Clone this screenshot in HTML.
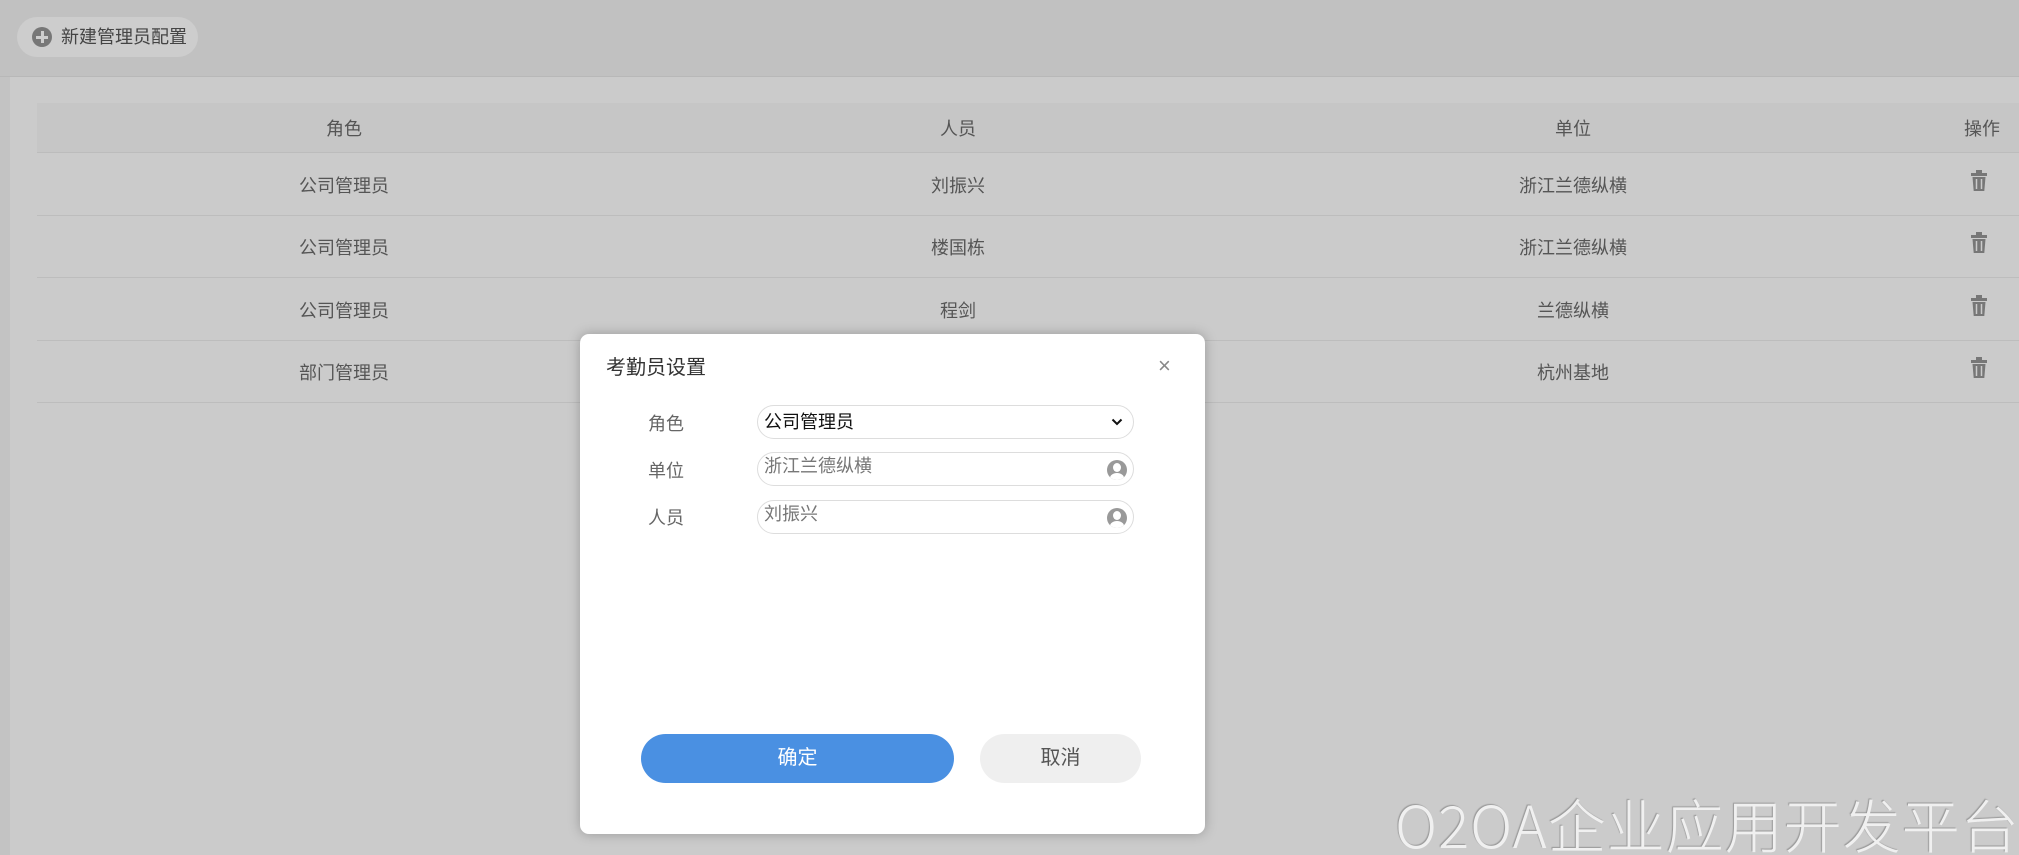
<!DOCTYPE html>
<html><head><meta charset="utf-8"><style>
*{margin:0;padding:0;box-sizing:border-box}
html,body{width:2019px;height:855px;overflow:hidden;background:#cbcbcb}
body{font-family:"Liberation Sans","Noto Sans CJK SC",sans-serif;position:relative;color:#555}
.top{position:absolute;left:0;top:0;width:2019px;height:77px;background:#c1c1c1;border-bottom:1px solid #b8b8b8}
.lstrip{position:absolute;left:0;top:77px;width:10px;height:778px;background:#c3c3c3}
.btn{position:absolute;left:17px;top:17px;width:181px;height:40px;border-radius:20px;background:#cdcdcd;font-size:18px;line-height:40px;padding-left:44px;color:#444}
.btn .ic{position:absolute;left:15px;top:10px;width:20px;height:20px;border-radius:50%;background:#777}
.btn .ic:before,.btn .ic:after{content:"";position:absolute;background:#cdcdcd}
.btn .ic:before{left:4px;top:8.5px;width:12px;height:3px}
.btn .ic:after{left:8.5px;top:4px;width:3px;height:12px}
.hdr{position:absolute;left:37px;top:103px;width:1982px;height:50px;background:#c6c6c6;border-bottom:1px solid #bcbcbc}
.row{position:absolute;left:37px;width:1982px;height:62px;border-bottom:1px solid #bdbdbd}
.c{position:absolute;transform:translateX(-50%);font-size:18px;white-space:nowrap}
.hdr .c{top:12px}
.row .c{top:18px}
.trash{position:absolute;left:1934px;top:16px}
.dlg{position:absolute;left:580px;top:334px;width:625px;height:500px;background:#fff;border-radius:9px;box-shadow:0 0 12px rgba(0,0,0,.25)}
.title{position:absolute;left:26px;top:17px;font-size:20px;color:#333}
.close{position:absolute;left:578px;top:19px;font-size:22px;color:#888}
.lbl{position:absolute;left:68px;font-size:18px;color:#666}
.inp{position:absolute;left:177px;width:377px;height:34px;border:1px solid #ddd;border-radius:17px;font-size:18px;padding-left:6px;line-height:26px}
.pic{position:absolute;right:6px;top:7px;width:20px;height:20px;border-radius:50%;background:#999;overflow:hidden}
.pic:before{content:"";position:absolute;left:6px;top:3px;width:8px;height:9px;border-radius:50%;background:#fff}
.pic:after{content:"";position:absolute;left:3px;top:13px;width:14px;height:10px;border-radius:50%;background:#fff}
.ok{position:absolute;left:61px;top:400px;width:313px;height:49px;border-radius:25px;background:#4a90e2;color:#fff;font-size:20px;text-align:center;line-height:49px}
.cancel{position:absolute;left:400px;top:400px;width:161px;height:49px;border-radius:25px;background:#efefef;color:#555;font-size:20px;text-align:center;line-height:49px}
.wm{position:absolute;left:1395px;top:781px;font-size:58px;color:#f0f0f0;letter-spacing:1px;text-shadow:-1px -1px 1px #999;white-space:nowrap;font-family:"Noto Sans CJK SC",sans-serif;font-weight:300}
</style></head><body>
<div class="top"></div><div class="lstrip"></div>
<div class="btn"><span class="ic"></span>新建管理员配置</div>
<div class="hdr"><span class="c" style="left:307px">角色</span><span class="c" style="left:921px">人员</span><span class="c" style="left:1536px">单位</span><span class="c" style="left:1945px">操作</span></div>
<div class="row" style="top:154px"><span class="c" style="left:307px">公司管理员</span><span class="c" style="left:921px">刘振兴</span><span class="c" style="left:1536px">浙江兰德纵横</span><svg class="trash" width="16" height="22" viewBox="0 0 16 22"><rect x="5" y="0" width="6" height="3" fill="#777"/><rect x="0" y="3" width="16" height="3" fill="#777"/><path d="M1.5 7h13l-1.2 14H2.7z" fill="#777"/><path d="M5.5 9v10M10.5 9v10" stroke="#cbcbcb" stroke-width="1.5"/></svg></div>
<div class="row" style="top:216px"><span class="c" style="left:307px">公司管理员</span><span class="c" style="left:921px">楼国栋</span><span class="c" style="left:1536px">浙江兰德纵横</span><svg class="trash" width="16" height="22" viewBox="0 0 16 22"><rect x="5" y="0" width="6" height="3" fill="#777"/><rect x="0" y="3" width="16" height="3" fill="#777"/><path d="M1.5 7h13l-1.2 14H2.7z" fill="#777"/><path d="M5.5 9v10M10.5 9v10" stroke="#cbcbcb" stroke-width="1.5"/></svg></div>
<div class="row" style="top:279px"><span class="c" style="left:307px">公司管理员</span><span class="c" style="left:921px">程剑</span><span class="c" style="left:1536px">兰德纵横</span><svg class="trash" width="16" height="22" viewBox="0 0 16 22"><rect x="5" y="0" width="6" height="3" fill="#777"/><rect x="0" y="3" width="16" height="3" fill="#777"/><path d="M1.5 7h13l-1.2 14H2.7z" fill="#777"/><path d="M5.5 9v10M10.5 9v10" stroke="#cbcbcb" stroke-width="1.5"/></svg></div>
<div class="row" style="top:341px"><span class="c" style="left:307px">部门管理员</span><span class="c" style="left:1536px">杭州基地</span><svg class="trash" width="16" height="22" viewBox="0 0 16 22"><rect x="5" y="0" width="6" height="3" fill="#777"/><rect x="0" y="3" width="16" height="3" fill="#777"/><path d="M1.5 7h13l-1.2 14H2.7z" fill="#777"/><path d="M5.5 9v10M10.5 9v10" stroke="#cbcbcb" stroke-width="1.5"/></svg></div>
<div class="dlg">
<div class="title">考勤员设置</div>
<div class="close">×</div>
<div class="lbl" style="top:76px">角色</div>
<div class="inp" style="top:71px;color:#111;line-height:32px">公司管理员<svg style="position:absolute;right:10px;top:12px" width="12" height="8" viewBox="0 0 12 8"><path d="M1.5 1.5l4.5 4.5 4.5-4.5" stroke="#111" stroke-width="2" fill="none"/></svg></div>
<div class="lbl" style="top:123px">单位</div>
<div class="inp" style="top:118px;color:#777">浙江兰德纵横<span class="pic"></span></div>
<div class="lbl" style="top:170px">人员</div>
<div class="inp" style="top:166px;color:#777">刘振兴<span class="pic"></span></div>
<div class="ok">确定</div>
<div class="cancel">取消</div>
</div>
<div class="wm">O2OA企业应用开发平台</div>
</body></html>
